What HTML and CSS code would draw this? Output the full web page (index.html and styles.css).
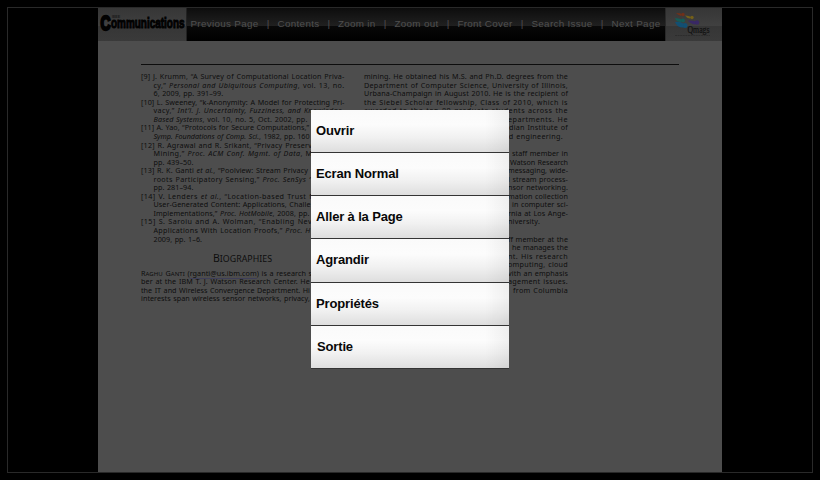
FILE: index.html
```
<!DOCTYPE html>
<html lang="fr">
<head>
<meta charset="utf-8">
<title>Communications</title>
<link rel="stylesheet" href="styles.css">
</head>
<body>
<div class="stage">
  <main class="page">
    <header class="bar">
      <div class="brand">
        <svg width="88" height="33" viewBox="0 0 88 33">
          <text class="tiny" x="14" y="9.800" textLength="8" lengthAdjust="spacingAndGlyphs">IEEE</text>
          <g transform="translate(2.500 21.700) scale(1 1.420)"><text class="big" x="0" y="0" textLength="10" lengthAdjust="spacingAndGlyphs">C</text></g>
          <g transform="translate(13 20) scale(1 1.500)"><text class="word" x="0" y="0" textLength="73.500" lengthAdjust="spacingAndGlyphs">ommunications</text></g>
        </svg>
      </div>
      <nav class="nav">
        <span class="fit">Previous Page</span><i>|</i>
        <span class="fit">Contents</span><i>|</i>
        <span class="fit">Zoom in</span><i>|</i>
        <span class="fit">Zoom out</span><i>|</i>
        <span class="fit">Front Cover</span><i>|</i>
        <span class="fit">Search Issue</span><i>|</i>
        <span class="fit">Next Page</span>
      </nav>
      <div class="qmags">
        <svg width="56" height="33" viewBox="0 0 56 33">
          <g fill="#713019"><circle cx="17" cy="6.500" r="1.700"/><path d="M10 5q4 0 6 1l-1 2q-3-1-5-3z"/></g>
          <g fill="#746019"><circle cx="26" cy="9.500" r="1.700"/><path d="M19 7.500q4 0 6 1.500l-1 1.500q-3 0-5-3z"/></g>
          <g fill="#155b55"><circle cx="17" cy="12.500" r="2"/><path d="M9 10q4 0 7 1.500l-1 2.500q-5 0-6-4z"/></g>
          <g fill="#392865"><circle cx="31" cy="14.500" r="2.200"/><path d="M22 12.500q5 0 8 1l-1 3q-5-1-7-4z"/></g>
          <g fill="#124f72"><circle cx="19" cy="17.500" r="2.500"/><path d="M9 14q5-1 9 2l-1 3.500q-6 0-8-5.500z"/></g>
          <text class="q" x="21.500" y="24.500" textLength="22" lengthAdjust="spacingAndGlyphs">Qmags</text>
          <path d="M9 27.500h35" stroke="#2b2b2b" stroke-width=".8" stroke-dasharray="2 .6"/>
        </svg>
      </div>
    </header>
    <hr class="rule">
    <div class="columns">
      <section class="col">
        <p class="fit">[9] J. Krumm, “A Survey of Computational Location Priva-</p>
        <p class="fit in">cy,” <em>Personal and Ubiquitous Computing</em>, vol. 13, no.</p>
        <p class="in">6, 2009, pp. 391–99.</p>
        <p class="fit">[10] L. Sweeney, “k-Anonymity: A Model for Protecting Pri-</p>
        <p class="fit in">vacy,” <em>Int’l. J. Uncertainty, Fuzziness, and Knowledge-</em></p>
        <p class="fit in w154"><em>Based Systems</em>, vol. 10, no. 5, Oct. 2002, pp.</p>
        <p class="fit w168">[11] A. Yao, “Protocols for Secure Computations,”</p>
        <p class="fit in w156"><em>Symp. Foundations of Comp. Sci.</em>, 1982, pp. 160</p>
        <p class="fit w171">[12] R. Agrawal and R. Srikant, “Privacy Preserv</p>
        <p class="fit in w159">Mining,” <em>Proc. ACM Conf. Mgmt. of Data</em>, M</p>
        <p class="in">pp. 439–50.</p>
        <p class="fit w167">[13] R. K. Ganti <em>et al.</em>, “Poolview: Stream Privacy</p>
        <p class="fit in w157">roots Participatory Sensing,” <em>Proc. SenSys ’</em></p>
        <p class="in">pp. 281–94.</p>
        <p class="fit w171">[14] V. Lenders <em>et al.</em>, “Location-based Trust f</p>
        <p class="fit in w157">User-Generated Content: Applications, Challe</p>
        <p class="fit in w156">Implementations,” <em>Proc. HotMobile</em>, 2008, pp.</p>
        <p class="fit w171">[15] S. Saroiu and A. Wolman, “Enabling Nev</p>
        <p class="fit in w157">Applications With Location Proofs,” <em>Proc. H</em></p>
        <p class="in">2009, pp. 1–6.</p>
        <h2><span class="fit">B<small>IOGRAPHIES</small></span></h2>
        <p class="fit w171">R<small>AGHU</small> G<small>ANTI</small> (<a>rganti@us.ibm.com</a>) is a research s</p>
        <p class="fit w169">ber at the IBM T. J. Watson Research Center. He</p>
        <p class="fit w169">the IT and Wireless Convergence Department. Hi</p>
        <p class="fit w169">interests span wireless sensor networks, privacy,</p>
      </section>
      <section class="col right">
        <p class="fit">mining. He obtained his M.S. and Ph.D. degrees from the</p>
        <p class="fit">Department of Computer Science, University of Illinois,</p>
        <p class="fit">Urbana-Champaign in August 2010. He is the recipient of</p>
        <p class="fit">the Siebel Scholar fellowship, Class of 2010, which is</p>
        <p class="fit">awarded to the top 80 graduate students across the</p>
        <p class="fit w60">epartments. He</p>
        <p class="fit w59">dian Institute of</p>
        <p class="fit w59 e5">nd engineering.</p>
        <p>&nbsp;</p>
        <p class="fit w56">staff member in</p>
        <p class="fit w58">Watson Research</p>
        <p class="fit w60">messaging, wide-</p>
        <p class="fit w60">l stream process-</p>
        <p class="fit w60">nsor networking.</p>
        <p class="fit w60">mation collection</p>
        <p class="fit w56">in computer sci-</p>
        <p class="fit w60">rnia at Los Ange-</p>
        <p class="fit w32 e28">niversity.</p>
        <p>&nbsp;</p>
        <p class="fit w60">ff member at the</p>
        <p class="fit w56">he manages the</p>
        <p class="fit w60">nt. His research</p>
        <p class="fit w60">omputing, cloud</p>
        <p class="fit w60">vith an emphasis</p>
        <p class="fit w60">agement issues.</p>
        <p class="fit w55">from Columbia</p>
      </section>
    </div>
  </main>
  <ul class="menu">
    <li>Ouvrir</li>
    <li>Ecran Normal</li>
    <li>Aller à la Page</li>
    <li>Agrandir</li>
    <li>Propriétés</li>
    <li>Sortie</li>
  </ul>
</div>
<script src="fit.js"></script>
</body>
</html>
```
FILE: styles.css
```
* { box-sizing: border-box; }
body { margin: 0; background: #000; width: 820px; height: 480px; overflow: hidden; padding: 7px 0 0 7px; font-family: "Liberation Sans", Arial, sans-serif; }
.stage { position: relative; width: 806px; height: 466px; border: 1px solid #292929; display: flex; justify-content: center; }
.page { width: 624px; height: 464px; background: #4d4d4d; overflow: hidden; }
.bar { display: flex; height: 33px; background: linear-gradient(#0d0d0d, #202020 54%, #080808 56%, #000); }
.brand, .qmags { flex: none; background: linear-gradient(#363636, #404040 54%, #363636 56%, #3a3a3a); }
.brand { width: 89px; border-right: 1px solid #222; }
.qmags { width: 57px; border-left: 1px solid #292929; }
.brand svg, .qmags svg { display: block; }
.tiny { font: bold 3.500px "Liberation Sans", sans-serif; fill: #191919; }
.big, .word { font-family: "Liberation Sans", sans-serif; font-weight: bold; fill: #020202; stroke: #020202; }
.big { font-size: 13.800px; stroke-width: 1.600px; }
.word { font-size: 9.500px; stroke-width: .7px; }
.q { font: 9.500px "Liberation Serif", serif; fill: #111; stroke: #111; stroke-width: .2px; }
.nav { flex: 1; display: grid; grid-template-columns: 68px 19px 42px 18.500px 37.500px 19px 44px 19px 55px 19px 61px 19px 49px; align-content: start; padding: 9px 0 0 3.500px; font-size: 9.800px; line-height: 14px; color: #505050; white-space: nowrap; }
.nav i { font-style: normal; text-align: center; }
.rule { width: 538px; height: 1px; border: 0; background: #0d0d0d; margin: 23px 0 0 43px; }
.columns { display: grid; grid-template-columns: 203.500px 204px; column-gap: 19.500px; margin: 7.200px 0 0 43px; font: 400 7.200px/8.550px "Noto Sans", "Open Sans", sans-serif; color: #0d0d0d; white-space: nowrap; }
.col p { margin: 0; height: 8.550px; letter-spacing: .05px; word-spacing: .6px; }
.col .in { margin-left: 12.500px; }
.col h2 { margin: 7.500px 0 4.200px; height: 14px; font: 10.500px/14px "Noto Sans", sans-serif; padding-left: 72px; }
.col h2 .fit { display: block; width: 59px; }
.col small { font-size: 84%; }
.col a { text-decoration: underline; text-decoration-color: #3f3f58; text-decoration-thickness: .5px; text-underline-offset: 1.500px; }
.right p { margin-left: auto; }
.right .e5 { margin-right: 5px; }
.right .e28 { margin-right: 28px; }
.w171 { width: 171px; } .w169 { width: 169px; } .w168 { width: 168px; } .w167 { width: 167px; }
.w159 { width: 159px; } .w157 { width: 157px; } .w156 { width: 156px; } .w154 { width: 154px; }
.w60 { width: 60px; } .w59 { width: 59px; } .w58 { width: 58px; } .w56 { width: 56px; } .w55 { width: 55px; } .w32 { width: 32px; }
.menu { position: absolute; left: 303px; top: 102px; width: 198px; height: 258px; margin: 0; padding: 0; list-style: none; display: grid; grid-template-rows: repeat(3, 43px) 43.500px 43.500px 42px; box-shadow: 0 1px 0 #333; }
.menu li { padding-left: 5px; font-weight: bold; font-size: 13px; letter-spacing: -.15px; line-height: 42px; color: #080808; background: linear-gradient(90deg, transparent 88%, rgba(0,0,0,.05)), linear-gradient(#fafafa, #fcfcfc 35%, #f1f1f1 65%, #dedede); border-bottom: 1px solid #343434; }
.menu li:last-child { border-bottom: 0; padding-left: 6px; }
```
FILE: fit.js
```
// Tracks each line so that its text fills the measure of its box.
document.querySelectorAll('.fit').forEach(el => {
  el.style.letterSpacing = '0px';
  const range = document.createRange();
  range.selectNodeContents(el);
  const natural = range.getBoundingClientRect().width;
  const target = el.getBoundingClientRect().width;
  el.style.letterSpacing = (target - natural) / el.textContent.length + 'px';
});
```
